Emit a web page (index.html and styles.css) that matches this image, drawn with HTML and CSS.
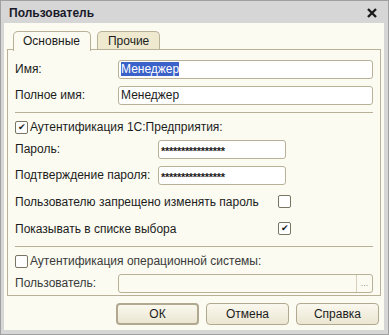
FILE: index.html
```html
<!DOCTYPE html>
<html lang="ru">
<head>
  <meta charset="UTF-8">
  <title>Пользователь</title>
  <link rel="stylesheet" href="styles.css">
</head>
<body>
  <div class="window">
    <div class="title-bar">
      <span class="title">Пользователь</span>
      <svg class="close" width="12" height="12" viewBox="0 0 12 12">
        <path d="M2 2 L10 10 M10 2 L2 10" stroke="#1a1a1a" stroke-width="2.4" fill="none"/>
      </svg>
    </div>

    <div class="content">
      <div class="tabs">
        <div class="tab active">Основные</div>
        <div class="tab">Прочие</div>
      </div>

      <div class="panel">
        <div class="row">
          <label class="label">Имя:</label>
          <div class="input wide"><span class="selected">Менеджер</span></div>
        </div>
        <div class="row">
          <label class="label">Полное имя:</label>
          <div class="input wide">Менеджер</div>
        </div>

        <div class="separator"></div>

        <div class="check-row">
          <span class="checkbox checked"></span>
          <span>Аутентификация 1С:Предприятия:</span>
        </div>
        <div class="row">
          <label class="label long">Пароль:</label>
          <div class="input short"><span class="stars">****************</span></div>
        </div>
        <div class="row">
          <label class="label long">Подтверждение пароля:</label>
          <div class="input short"><span class="stars">****************</span></div>
        </div>
        <div class="option-row">
          <span class="option-text">Пользователю запрещено изменять пароль</span>
          <span class="checkbox"></span>
        </div>
        <div class="option-row">
          <span class="option-text">Показывать в списке выбора</span>
          <span class="checkbox checked"></span>
        </div>

        <div class="separator"></div>

        <div class="check-row">
          <span class="checkbox"></span>
          <span class="muted">Аутентификация операционной системы:</span>
        </div>
        <div class="row">
          <label class="label muted">Пользователь:</label>
          <div class="input wide disabled">
            <span class="dots">...</span>
          </div>
        </div>
      </div>

      <div class="buttons">
        <button class="btn default">ОК</button>
        <button class="btn">Отмена</button>
        <button class="btn">Справка</button>
      </div>
    </div>
  </div>
</body>
</html>
```

FILE: styles.css
```css
body {
  margin: 0;
  font-family: "Liberation Sans", Arial, sans-serif;
  font-size: 12px;
  color: #1c1c1c;
  background: #ffffff;
}

.window {
  width: 389px;
  height: 335px;
  box-sizing: border-box;
  background: #d6d6d6;
  border: 1px solid #a0a0a0;
  padding: 0 4px 4px 3px;
  display: flex;
  flex-direction: column;
}

.title-bar {
  height: 21px;
  display: flex;
  align-items: center;
  justify-content: space-between;
  padding: 1px 6px 0 5px;
}

.title {
  font-weight: bold;
  color: #1a1a2a;
}

.content {
  flex: 1;
  background: #fbfbf1;
  padding: 8px 3px 0 3px;
}

.tabs {
  display: flex;
  gap: 6px;
  padding-left: 6px;
  height: 18px;
}

.tab {
  padding: 2px 10px 0 10px;
  border: 1px solid #b9b197;
  border-bottom: none;
  border-radius: 5px 5px 0 0;
  background: #eee9cf;
}

.tab.active {
  background: #fbfbf1;
  padding: 2px 10px 0 9px;
  height: 17px;
  position: relative;
  z-index: 1;
  margin-bottom: -1px;
}

.panel {
  border: 1px solid #b9b197;
  height: 247px;
  box-sizing: border-box;
  padding: 6px 7px 0 7px;
}

.row {
  display: flex;
  align-items: center;
  height: 26px;
}

.label {
  width: 103px;
}

.label.long {
  width: 143px;
}

.input {
  height: 19px;
  box-sizing: border-box;
  border: 1px solid #b9b197;
  border-radius: 3px;
  background: #ffffff;
  display: flex;
  align-items: center;
  padding-left: 2px;
}

.input.wide {
  flex: 1;
}

.input.short {
  width: 128px;
}

.selected {
  background: #3a62c9;
  color: #ffffff;
}

.stars {
  font-size: 11px;
  font-weight: bold;
  letter-spacing: -0.3px;
  margin-top: 4px;
}

.separator {
  border-top: 1px solid #b9b197;
  margin: 4px 0 5px 0;
}

.check-row {
  display: flex;
  align-items: center;
  gap: 2px;
  height: 18px;
}

.checkbox {
  width: 11px;
  height: 11px;
  border: 1px solid #7a7563;
  border-radius: 2px;
  background: #ffffff;
  display: inline-flex;
  align-items: center;
  justify-content: center;
  font-size: 10px;
  line-height: 1;
}

.checkbox.checked::after {
  content: "✔";
  font-size: 9px;
}

.option-row {
  display: flex;
  align-items: center;
  height: 27px;
}

.option-text {
  width: 263px;
}

.muted {
  color: #3a3a3a;
}

.input.disabled {
  background: #fbfbf1;
  justify-content: flex-end;
  padding: 0;
}

.dots {
  width: 15px;
  height: 100%;
  border-left: 1px solid #d6d0ba;
  color: #9a9585;
  text-align: center;
  line-height: 17px;
  font-size: 9px;
}

.buttons {
  display: flex;
  justify-content: flex-end;
  gap: 7px;
  padding: 7px 2px 0 0;
}

.btn {
  width: 83px;
  height: 22px;
  font-family: "Liberation Sans", Arial, sans-serif;
  font-size: 12px;
  color: #1c1c1c;
  background: linear-gradient(#faf8ee, #ebe6d2);
  border: 1px solid #b1a98f;
  border-radius: 4px;
}

.btn.default {
  border: 2px solid #b1a98f;
}
```
